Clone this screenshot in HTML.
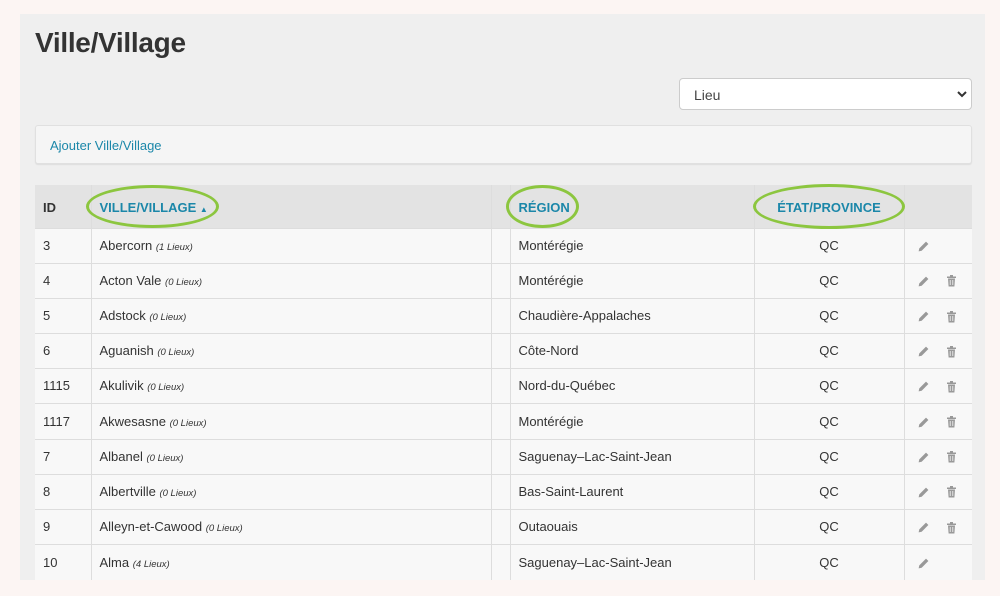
<!DOCTYPE html><html><head><meta charset="utf-8"><style>
*{box-sizing:border-box;margin:0;padding:0}
body{width:1000px;height:596px;background:#fcf5f3;font-family:"Liberation Sans",sans-serif;position:relative;overflow:hidden;color:#333}
.panel{position:absolute;left:20px;top:14px;width:965px;height:566px;background:#efefef}
h1{position:absolute;left:35px;top:27px;font-size:28px;font-weight:bold;color:#333;letter-spacing:-0.3px}
.sel{position:absolute;left:679px;top:78px;width:293px;height:32px;background:#fff;border:1px solid #ccc;border-radius:4px;font-size:14px;padding:8px 14px;color:#444}
.sel svg{position:absolute;right:4px;top:11px}
.well{position:absolute;left:35px;top:125px;width:937px;height:39px;background:#f5f5f5;border:1px solid #e0e0e0;border-radius:3px;box-shadow:0 1px 1px rgba(0,0,0,.08);font-size:13px;color:#1b87a9;padding:12px 14px}
table{position:absolute;left:35px;top:185px;width:937px;border-collapse:collapse;font-size:13px}
th{height:43px;background:#e3e3e3;text-align:left;font-weight:bold;color:#1b87a9;font-size:13px;padding:2px 8px 0;border-left:1px solid #ddd}
th:first-child{color:#333;border-left:none}
td{height:35.2px;background:#f8f8f8;border-top:1px solid #ddd;border-left:1px solid #ddd;padding:0 8px 1px;color:#333}
td:first-child{border-left:none}
td i{font-size:9.5px;color:#333}
td svg{vertical-align:middle}
.c{text-align:center}
.ell{position:absolute;border:3px solid #8cc63f;border-radius:50%}
</style></head><body>
<div class="panel"></div>
<h1>Ville/Village</h1>
<div class="sel">Lieu<svg width="10" height="8" viewBox="0 0 10 8"><path d="M1 2l4 4 4-4" stroke="#333" stroke-width="2" fill="none"/></svg></div>
<div class="well">Ajouter Ville/Village</div>
<table>
<colgroup><col style="width:56px"><col style="width:400px"><col style="width:19px"><col style="width:244px"><col style="width:150px"><col style="width:68px"></colgroup>
<tr><th>ID</th><th>VILLE/VILLAGE <span style="font-size:8px">▲</span></th><th></th><th>RÉGION</th><th class="c">ÉTAT/PROVINCE</th><th></th></tr>
<tbody id="b"></tbody>
</table>
<div class="ell" style="left:86px;top:185px;width:133px;height:43px"></div>
<div class="ell" style="left:506px;top:185px;width:73px;height:43px"></div>
<div class="ell" style="left:753px;top:184px;width:152px;height:45px"></div>
<script>
var d=[["3","Abercorn","1","Montérégie",0],["4","Acton Vale","0","Montérégie",1],["5","Adstock","0","Chaudière-Appalaches",1],["6","Aguanish","0","Côte-Nord",1],["1115","Akulivik","0","Nord-du-Québec",1],["1117","Akwesasne","0","Montérégie",1],["7","Albanel","0","Saguenay–Lac-Saint-Jean",1],["8","Albertville","0","Bas-Saint-Laurent",1],["9","Alleyn-et-Cawood","0","Outaouais",1],["10","Alma","4","Saguenay–Lac-Saint-Jean",0]];
var pen='<svg width="13" height="13" viewBox="0 0 12 12"><path d="M1.5 10.5l0.6-2.8L8.3 1.5l2.2 2.2L4.3 9.9z" fill="#999"/></svg>';
var tr='<svg width="11" height="12" viewBox="0 0 11 12" style="margin-left:16px"><rect x="1" y="1.5" width="9" height="1.5" fill="#999"/><rect x="4" y="0" width="3" height="2" fill="#999"/><path d="M2 3.5h7l-.6 8H2.6z" fill="#999"/><path d="M4.2 5v5M6.8 5v5" stroke="#f8f8f8" stroke-width=".8"/></svg>';
var h='';d.forEach(function(r){h+='<tr><td>'+r[0]+'</td><td>'+r[1]+' <i>('+r[2]+' Lieux)</i></td><td></td><td>'+r[3]+'</td><td class="c">QC</td><td style="padding-left:12px">'+pen+(r[4]?tr:'')+'</td></tr>'});
document.getElementById('b').innerHTML=h;
</script>
</body></html>
